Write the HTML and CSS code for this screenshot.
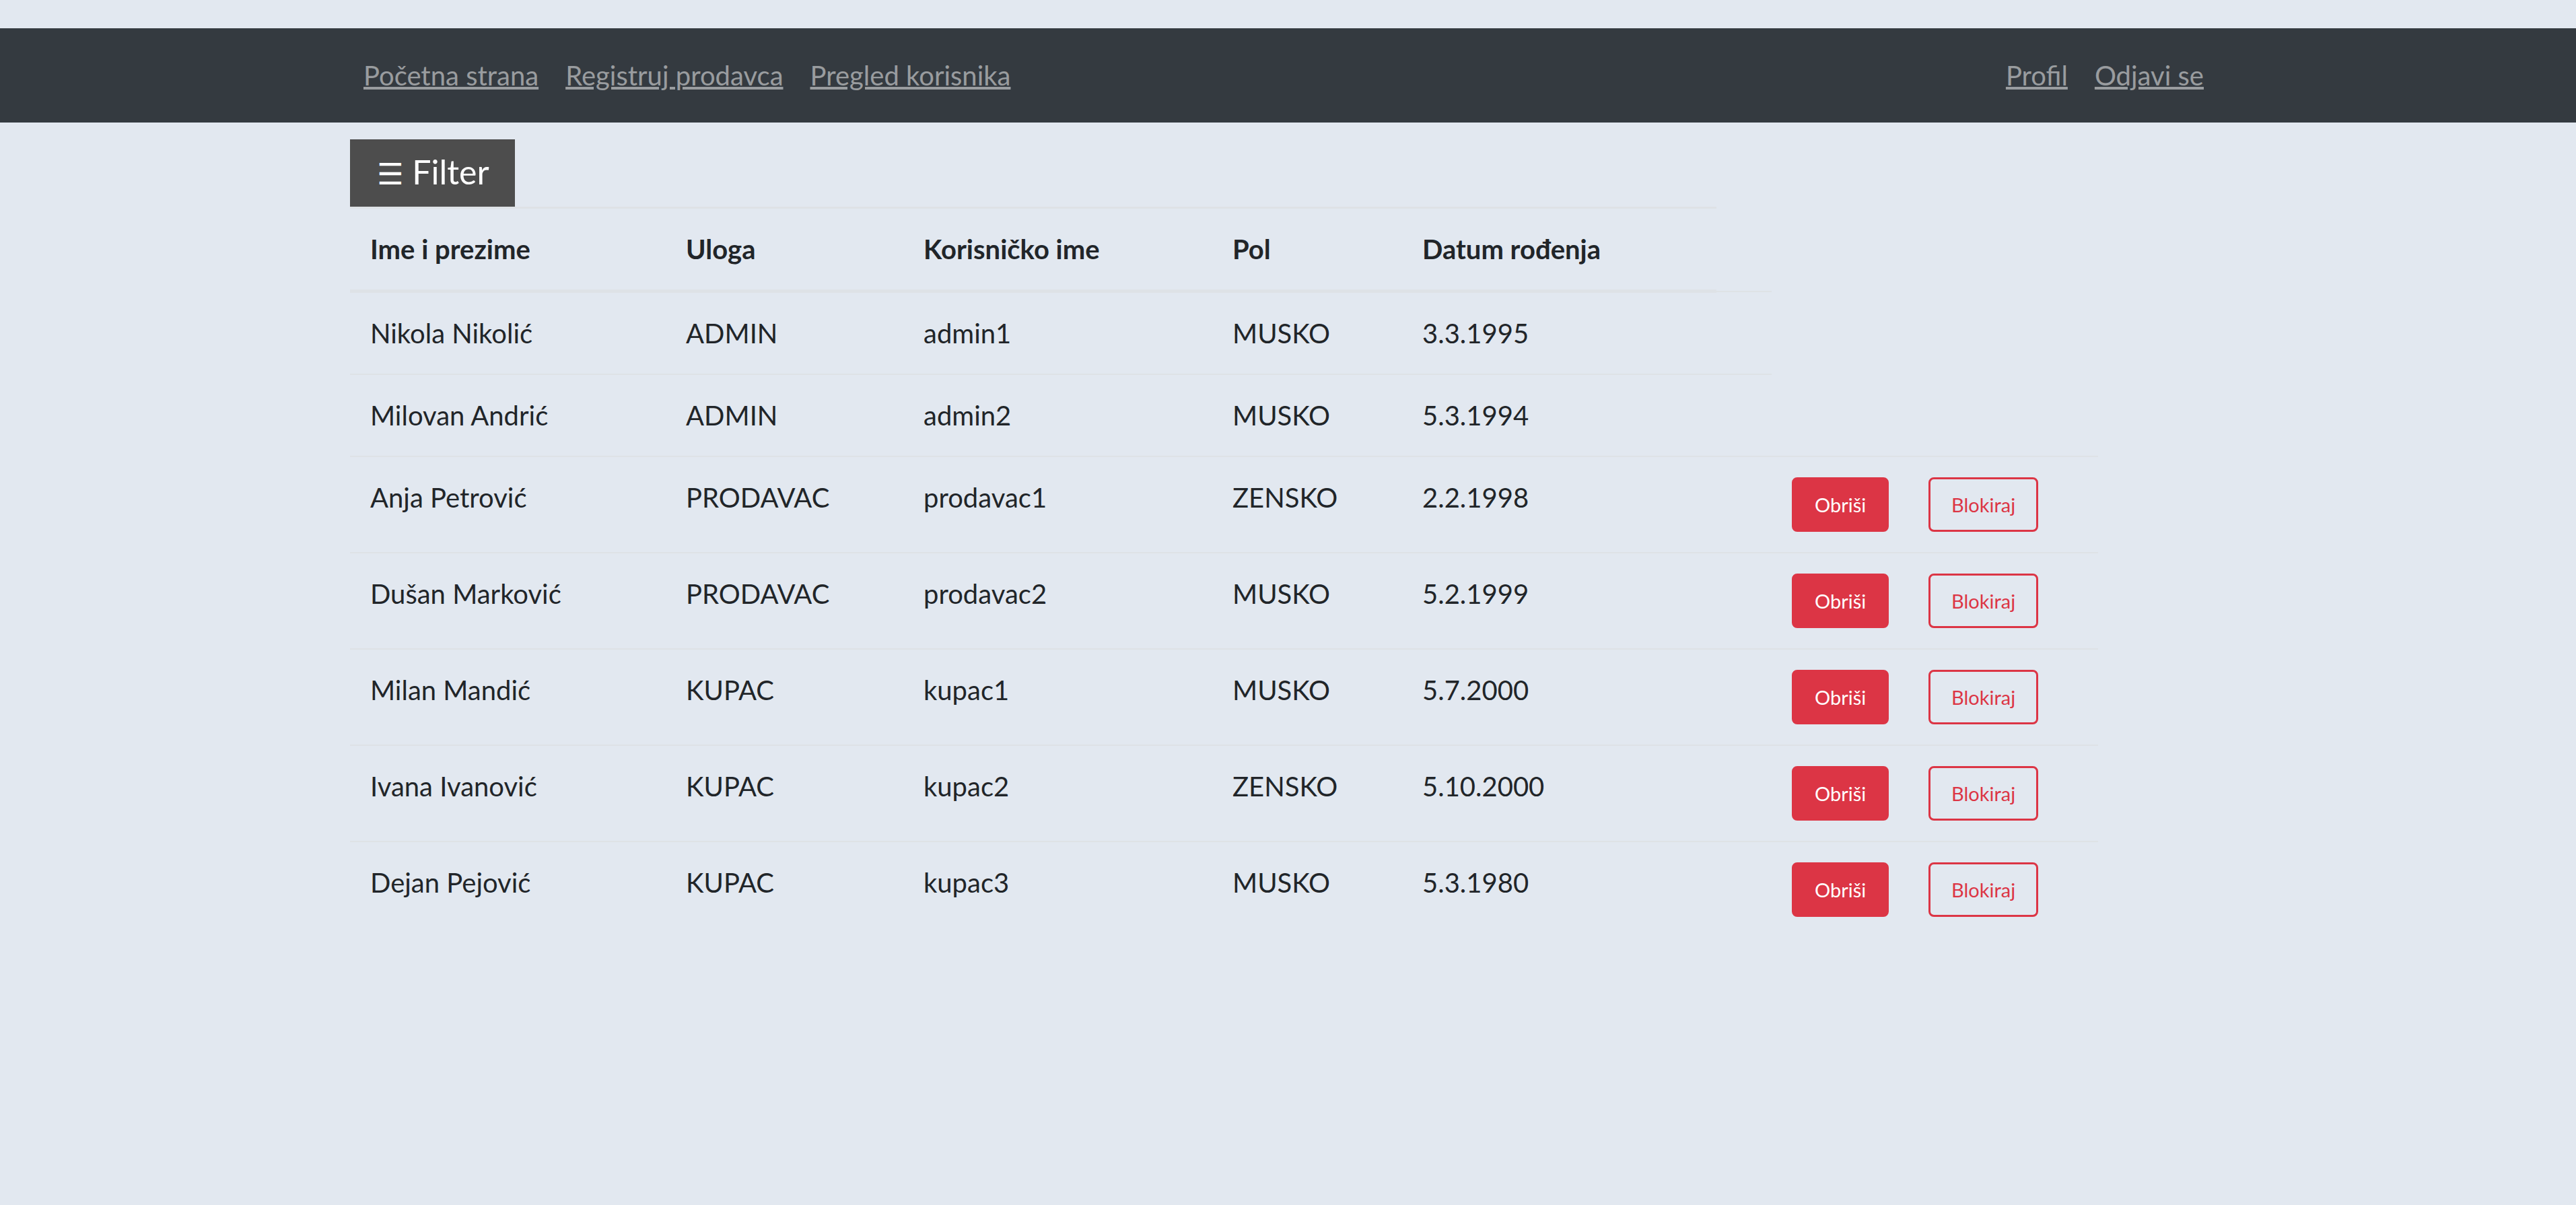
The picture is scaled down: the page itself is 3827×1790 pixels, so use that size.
FILE: index.html
```html
<!DOCTYPE html>
<html lang="sr">
<head>
<meta charset="utf-8">
<title>Pregled korisnika</title>
<link rel="stylesheet" href="styles.css">
</head>
<body>
<nav class="navbar">
  <div class="container nav-inner">
    <div class="nav-group">
      <a class="nav-link" href="#">Početna strana</a>
      <a class="nav-link" href="#">Registruj prodavca</a>
      <a class="nav-link" href="#">Pregled korisnika</a>
    </div>
    <div class="nav-group">
      <a class="nav-link" href="#">Profil</a>
      <a class="nav-link" href="#">Odjavi se</a>
    </div>
  </div>
</nav>
<main class="container">
  <button class="filter-btn" type="button"><span class="filter-icon">☰</span> Filter</button>
  <table class="users-table">
    <colgroup>
      <col class="c-name"><col class="c-role"><col class="c-user"><col class="c-sex"><col class="c-date"><col class="c-empty"><col class="c-del"><col class="c-block">
    </colgroup>
    <thead>
      <tr><th>Ime i prezime</th><th>Uloga</th><th>Korisničko ime</th><th>Pol</th><th>Datum rođenja</th></tr>
    </thead>
    <tbody>
      <tr><td>Nikola Nikolić</td><td>ADMIN</td><td>admin1</td><td>MUSKO</td><td>3.3.1995</td><td></td></tr>
      <tr><td>Milovan Andrić</td><td>ADMIN</td><td>admin2</td><td>MUSKO</td><td>5.3.1994</td><td></td></tr>
      <tr><td>Anja Petrović</td><td>PRODAVAC</td><td>prodavac1</td><td>ZENSKO</td><td>2.2.1998</td><td></td>
        <td><button class="btn btn-danger" type="button">Obriši</button></td><td><button class="btn btn-outline" type="button">Blokiraj</button></td></tr>
      <tr><td>Dušan Marković</td><td>PRODAVAC</td><td>prodavac2</td><td>MUSKO</td><td>5.2.1999</td><td></td>
        <td><button class="btn btn-danger" type="button">Obriši</button></td><td><button class="btn btn-outline" type="button">Blokiraj</button></td></tr>
      <tr><td>Milan Mandić</td><td>KUPAC</td><td>kupac1</td><td>MUSKO</td><td>5.7.2000</td><td></td>
        <td><button class="btn btn-danger" type="button">Obriši</button></td><td><button class="btn btn-outline" type="button">Blokiraj</button></td></tr>
      <tr><td>Ivana Ivanović</td><td>KUPAC</td><td>kupac2</td><td>ZENSKO</td><td>5.10.2000</td><td></td>
        <td><button class="btn btn-danger" type="button">Obriši</button></td><td><button class="btn btn-outline" type="button">Blokiraj</button></td></tr>
      <tr><td>Dejan Pejović</td><td>KUPAC</td><td>kupac3</td><td>MUSKO</td><td>5.3.1980</td><td></td>
        <td><button class="btn btn-danger" type="button">Obriši</button></td><td><button class="btn btn-outline" type="button">Blokiraj</button></td></tr>
    </tbody>
  </table>
</main>
</body>
</html>
```

FILE: styles.css
```css
html, body {
  margin: 0;
  padding: 0;
}

body {
  background: #e2e8f0;
  color: #212529;
  font-family: Lato, "Liberation Sans", sans-serif;
  font-size: 40px;
  line-height: 60px;
}

.container {
  width: 2787px;
  margin: 0 auto;
  box-sizing: border-box;
}

.navbar {
  margin-top: 42px;
  height: 140px;
  background: #343a40;
}

.nav-inner {
  height: 100%;
  display: flex;
  align-items: center;
  justify-content: space-between;
  padding-right: 13px;
}

.nav-group {
  display: flex;
}

.nav-link {
  display: block;
  padding: 0 20px;
  color: rgba(255, 255, 255, 0.5);
  text-decoration: underline;
}

.filter-btn {
  display: block;
  margin-top: 25px;
  height: 100px;
  padding: 0 38px 0 40px;
  border: 0;
  border-radius: 0;
  background: #4d4d4d;
  color: #fff;
  font-family: Lato, "Liberation Sans", sans-serif;
  font-size: 50px;
  line-height: 60px;
}

.filter-icon {
  font-family: "DejaVu Sans", sans-serif;
  font-size: 44px;
}

.users-table {
  border-collapse: collapse;
  table-layout: fixed;
  width: 2597px;
}

.c-name { width: 469px; }
.c-role { width: 353px; }
.c-user { width: 459px; }
.c-sex { width: 282px; }
.c-date { width: 467px; }
.c-empty { width: 82px; }
.c-del { width: 203px; }
.c-block { width: 282px; }

.users-table th,
.users-table td {
  padding: 30px;
  text-align: left;
  vertical-align: top;
  border-top: 2.5px solid #dee2e6;
  white-space: nowrap;
}

.users-table thead th {
  vertical-align: bottom;
  font-weight: 700;
  border-top-width: 3px;
  border-bottom: 5px solid #dee2e6;
}

.btn {
  display: inline-block;
  font-family: Lato, "Liberation Sans", sans-serif;
  font-size: 29px;
  line-height: 49px;
  padding: 13px 31px;
  border: 3px solid #dc3545;
  border-radius: 8px;
  vertical-align: top;
}

.btn-danger {
  background: #dc3545;
  color: #fff;
}

.btn-outline {
  background: transparent;
  color: #dc3545;
}
```
